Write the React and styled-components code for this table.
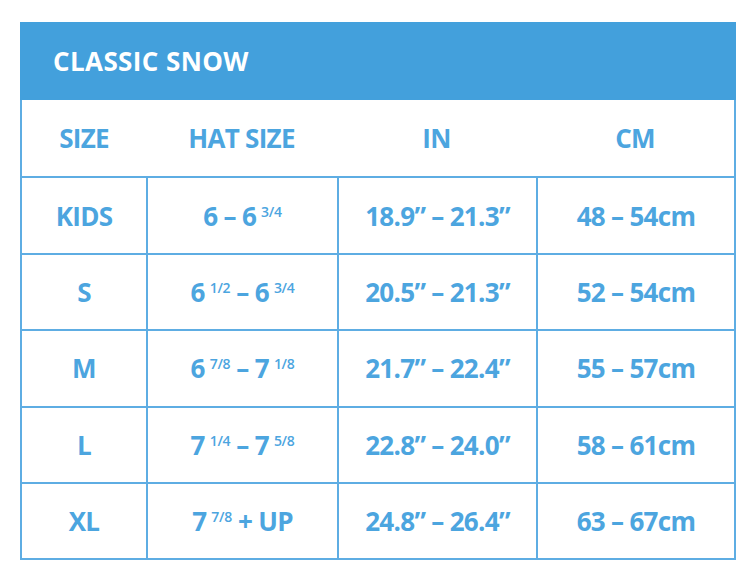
import styled, { createGlobalStyle } from "styled-components";

const GlobalStyle = createGlobalStyle`
  body {
    margin: 0;
    background: #ffffff;
    font-family: 'Open Sans', 'Lato', sans-serif;
  }
`;

const Page = styled.div`
  width: 749px;
  height: 582px;
  padding: 22px 13px 0 20px;
  box-sizing: border-box;
`;

const Table = styled.div`
  width: 716px;
  border: 2px solid #5eade3;
  border-top: none;
  box-sizing: border-box;
`;

const Title = styled.div`
  height: 78px;
  background: #43a0dc;
  margin: 0 -2px;
  padding-left: 33px;
  display: flex;
  align-items: center;
  color: #ffffff;
  font-weight: 700;
  font-size: 26px;
  letter-spacing: 0.4px;
`;

const Grid = styled.div`
  display: grid;
  grid-template-columns: 124px 191px 199px 1fr;
  grid-auto-rows: 76.4px;
`;

const Cell = styled.div`
  display: flex;
  align-items: center;
  justify-content: center;
  color: #4ca5df;
  font-weight: 700;
  font-size: 26px;
  letter-spacing: -0.7px;
  border-top: ${(p) => (p.$head ? "none" : "2px solid #5eade3")};
  border-left: ${(p) => (p.$col === 0 || p.$head ? "none" : "2px solid #5eade3")};
  box-sizing: border-box;
`;

const Frac = styled.sup`
  font-size: 14px;
  font-weight: 600;
  letter-spacing: -0.3px;
  margin-left: 5px;
  vertical-align: 9px;
  line-height: 0;
`;

const Range = ({ a, af, b, bf }) => (
  <span>
    {a}
    {af && <Frac>{af}</Frac>} – {b}
    {bf && <Frac>{bf}</Frac>}
  </span>
);

const rows = [
  ["KIDS", <Range a="6" b="6" bf="3/4" />, "18.9\u201D \u2013 21.3\u201D", "48 \u2013 54cm"],
  ["S", <Range a="6" af="1/2" b="6" bf="3/4" />, "20.5\u201D \u2013 21.3\u201D", "52 \u2013 54cm"],
  ["M", <Range a="6" af="7/8" b="7" bf="1/8" />, "21.7\u201D \u2013 22.4\u201D", "55 \u2013 57cm"],
  ["L", <Range a="7" af="1/4" b="7" bf="5/8" />, "22.8\u201D \u2013 24.0\u201D", "58 \u2013 61cm"],
  [
    "XL",
    <span>
      7<Frac>7/8</Frac> + UP
    </span>,
    "24.8\u201D \u2013 26.4\u201D",
    "63 \u2013 67cm",
  ],
];

const heads = ["SIZE", "HAT SIZE", "IN", "CM"];

export default function App() {
  return (
    <Page>
      <GlobalStyle />
      <Table>
        <Title>CLASSIC SNOW</Title>
        <Grid>
          {heads.map((h, i) => (
            <Cell key={h} $head $col={i}>
              {h}
            </Cell>
          ))}
          {rows.map((r, ri) =>
            r.map((c, ci) => (
              <Cell key={`${ri}-${ci}`} $col={ci}>
                {c}
              </Cell>
            ))
          )}
        </Grid>
      </Table>
    </Page>
  );
}
